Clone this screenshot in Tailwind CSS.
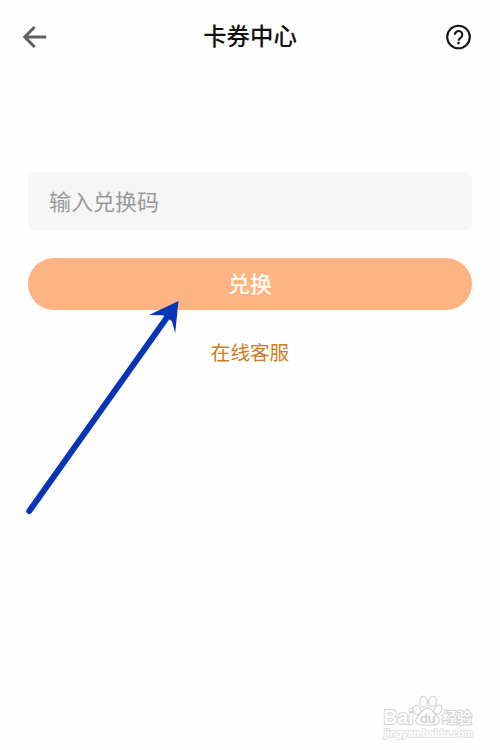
<!DOCTYPE html>
<html lang="zh-CN">
<head>
    <meta charset="UTF-8">
    <meta name="viewport" content="width=device-width, initial-scale=1.0">
    <title>卡券中心</title>
    <script src="https://cdn.jsdelivr.net/npm/@tailwindcss/browser@4"></script>
</head>
<body class="relative h-[750px] w-[500px] overflow-hidden bg-[#fefefe] font-['Noto_Sans_CJK_SC',sans-serif]">

    <!-- Header -->
    <header class="grid h-[74px] grid-cols-[1fr_auto_1fr] items-center px-[22px]">
        <button class="w-[25px]" aria-label="返回">
            <svg class="h-[24px] w-[25px]" viewBox="0 0 25 24" fill="none" stroke="#5f5f5f" stroke-width="3">
                <path d="M24.2 12H3M12.6 2L2.8 12l9.8 10" />
            </svg>
        </button>
        <h1 class="pb-0.5 text-[23.4px] leading-none font-medium text-[#111]">卡券中心</h1>
        <button class="mr-[7px] w-[25px] justify-self-end" aria-label="帮助">
            <svg class="h-[26px] w-[25px]" viewBox="0 0 25 26" fill="none" stroke="#151515" stroke-width="2.1">
                <circle cx="12.5" cy="13" r="11.3" />
                <path d="M8.9 10.7a3.7 3.7 0 1 1 5.7 3.1c-1.4.9-2 1.4-2 3" />
                <circle cx="12.5" cy="19.1" r="1.3" fill="#151515" stroke="none" />
            </svg>
        </button>
    </header>

    <!-- Redeem form -->
    <main class="flex flex-col px-7 pt-[98px]">
        <input type="text" placeholder="输入兑换码" class="h-[58px] rounded-md bg-[#f6f6f6] px-[21px] pb-[3px] text-[22px] text-gray-800 placeholder:text-[#999]">
        <button class="mt-7 flex h-[52px] items-center justify-center rounded-full bg-[#feb382] pb-1 text-[22px] leading-none font-medium text-[#fffaf0]">兑换</button>
        <a class="mt-8 self-center text-[19.6px] leading-5 text-[#d07a22]">在线客服</a>
    </main>

    <!-- Pointer arrow -->
    <svg class="absolute top-0 left-0 h-[750px] w-[500px]" viewBox="0 0 500 750">
        <path d="M29.3 511L168 316" stroke="#0735b8" stroke-width="6" stroke-linecap="round" />
        <path d="M178.5 301L149 315l14 .2 9 6 3.2 12z" fill="#0735b8" />
    </svg>

    <!-- Watermark -->
    <svg class="absolute top-[694px] left-[380px] h-[54px] w-[100px]" viewBox="-2 0 100 54" fill="#fff" stroke="#d3d3d3" stroke-width="1.2" stroke-linejoin="round">
        <g class="[paint-order:stroke]" stroke-width="2">
            <text x="1.5" y="30" font-size="21" font-weight="700" textLength="30" lengthAdjust="spacingAndGlyphs" font-family="Liberation Sans, sans-serif">Bai</text>
            <text x="60" y="29" font-size="15" font-weight="500" textLength="30" lengthAdjust="spacingAndGlyphs" font-family="Noto Sans CJK SC, sans-serif">经验</text>
            <text x="2" y="43" font-size="11" font-weight="700" textLength="89" lengthAdjust="spacingAndGlyphs" font-family="Liberation Sans, sans-serif" stroke="#e2e2e2">jingyan.baidu.com</text>
        </g>
        <ellipse cx="35" cy="16" rx="3.6" ry="4.8" transform="rotate(-15 35 16)" />
        <ellipse cx="41.5" cy="7.5" rx="3.8" ry="5.3" />
        <ellipse cx="50.5" cy="7.5" rx="3.8" ry="5.3" transform="rotate(10 50.5 7.5)" />
        <ellipse cx="56" cy="15.5" rx="3.6" ry="4.8" transform="rotate(25 56 15.5)" />
        <path d="M45.5 14c-4 0-5 3.5-8 6.500-3 2.700-4.500 5-3.500 7.500 1.200 3.500 5 3 11.500 3s10.300.5 11.500-3c1-2.500-.5-4.800-3.500-7.500-3-3-4-6.500-8-6.500z" />
        <text x="38" y="28.5" font-size="13.5" textLength="15.5" lengthAdjust="spacingAndGlyphs" font-family="Liberation Sans, sans-serif" fill="#c8c8c8" stroke-width=".4">du</text>
    </svg>

</body>
</html>
